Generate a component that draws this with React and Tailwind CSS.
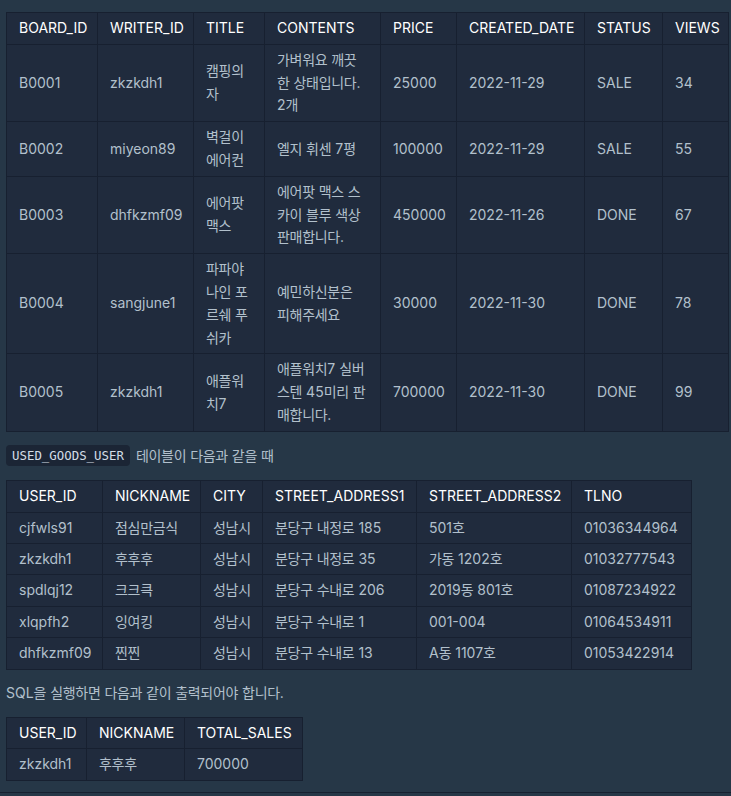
import React from "react";

const boards = [
  ["B0001", "zkzkdh1", "캠핑의자", "가벼워요 깨끗한 상태입니다. 2개", "25000", "2022-11-29", "SALE", "34"],
  ["B0002", "miyeon89", "벽걸이 에어컨", "엘지 휘센 7평", "100000", "2022-11-29", "SALE", "55"],
  ["B0003", "dhfkzmf09", "에어팟 맥스", "에어팟 맥스 스카이 블루 색상 판매합니다.", "450000", "2022-11-26", "DONE", "67"],
  ["B0004", "sangjune1", "파파야 나인 포르쉐 푸쉬카", "예민하신분은 피해주세요", "30000", "2022-11-30", "DONE", "78"],
  ["B0005", "zkzkdh1", "애플워치7", "애플워치7 실버 스텐 45미리 판매합니다.", "700000", "2022-11-30", "DONE", "99"],
];

const users = [
  ["cjfwls91", "점심만금식", "성남시", "분당구 내정로 185", "501호", "01036344964"],
  ["zkzkdh1", "후후후", "성남시", "분당구 내정로 35", "가동 1202호", "01032777543"],
  ["spdlqj12", "크크큭", "성남시", "분당구 수내로 206", "2019동 801호", "01087234922"],
  ["xlqpfh2", "잉여킹", "성남시", "분당구 수내로 1", "001-004", "01064534911"],
  ["dhfkzmf09", "찐찐", "성남시", "분당구 수내로 13", "A동 1107호", "01053422914"],
];

// hangul in the reference font is a bit narrower than Noto CJK
const Ko = ({ text }) =>
  text.split(/([\uAC00-\uD7A3]+)/).map((part, i) =>
    /[\uAC00-\uD7A3]/.test(part) ? (
      <span key={i} className="tracking-[-0.3px]">
        {part}
      </span>
    ) : (
      part
    ),
  );

const Table = ({ cols, widths, rows, nowrap, className = "" }) => (
  <table
    className={`table-fixed border-collapse bg-[#202b3d] ${className}`}
    style={{ width: widths.reduce((a, b) => a + b, 0) }}
  >
    <thead>
      <tr>
        {cols.map((c, i) => (
          <th
            key={c}
            style={{ width: widths[i] }}
            className="border border-[#172030] px-3 py-1 text-left font-normal whitespace-nowrap text-white"
          >
            {c}
          </th>
        ))}
      </tr>
    </thead>
    <tbody>
      {rows.map((row, r) => (
        <tr key={r}>
          {row.map((cell, i) => (
            <td
              key={i}
              className={`border border-[#172030] px-3 py-1 align-middle text-[#b2c0cc] ${
                nowrap ? "whitespace-nowrap" : ""
              }`}
            >
              <Ko text={cell} />
            </td>
          ))}
        </tr>
      ))}
    </tbody>
  </table>
);

export default function App() {
  return (
    <div className="h-[796px] overflow-hidden bg-[#263747] font-['Inter','Noto_Sans_CJK_KR',sans-serif] text-[14px] leading-[22.4px]">
      <div className="h-[793px] border-b border-[#172030] px-[6px] pt-[12px]">
        <Table
          cols={["BOARD_ID", "WRITER_ID", "TITLE", "CONTENTS", "PRICE", "CREATED_DATE", "STATUS", "VIEWS"]}
          widths={[91, 96, 71, 116, 76, 128, 78, 66]}
          rows={boards}
          className="leading-[22.8px]"
        />
        <p className="mt-[13px] mb-[13px] flex items-center gap-[6px] text-[#b2c0cc]">
          <code className="rounded-[4px] bg-[#1b2535] px-[6px] font-['DejaVu_Sans_Mono',monospace] text-[12.4px] leading-[21px] text-[#d3dde6]">
            USED_GOODS_USER
          </code>
          <span>
            <Ko text="테이블이 다음과 같을 때" />
          </span>
        </p>
        <Table
          cols={["USER_ID", "NICKNAME", "CITY", "STREET_ADDRESS1", "STREET_ADDRESS2", "TLNO"]}
          widths={[96, 98, 62, 154, 155, 120]}
          rows={users}
          nowrap
        />
        <p className="mt-[12px] mb-[13px] text-[#b2c0cc]">
          <Ko text="SQL을 실행하면 다음과 같이 출력되어야 합니다." />
        </p>
        <Table
          cols={["USER_ID", "NICKNAME", "TOTAL_SALES"]}
          widths={[80, 98, 118]}
          rows={[["zkzkdh1", "후후후", "700000"]]}
          nowrap
        />
      </div>
    </div>
  );
}
